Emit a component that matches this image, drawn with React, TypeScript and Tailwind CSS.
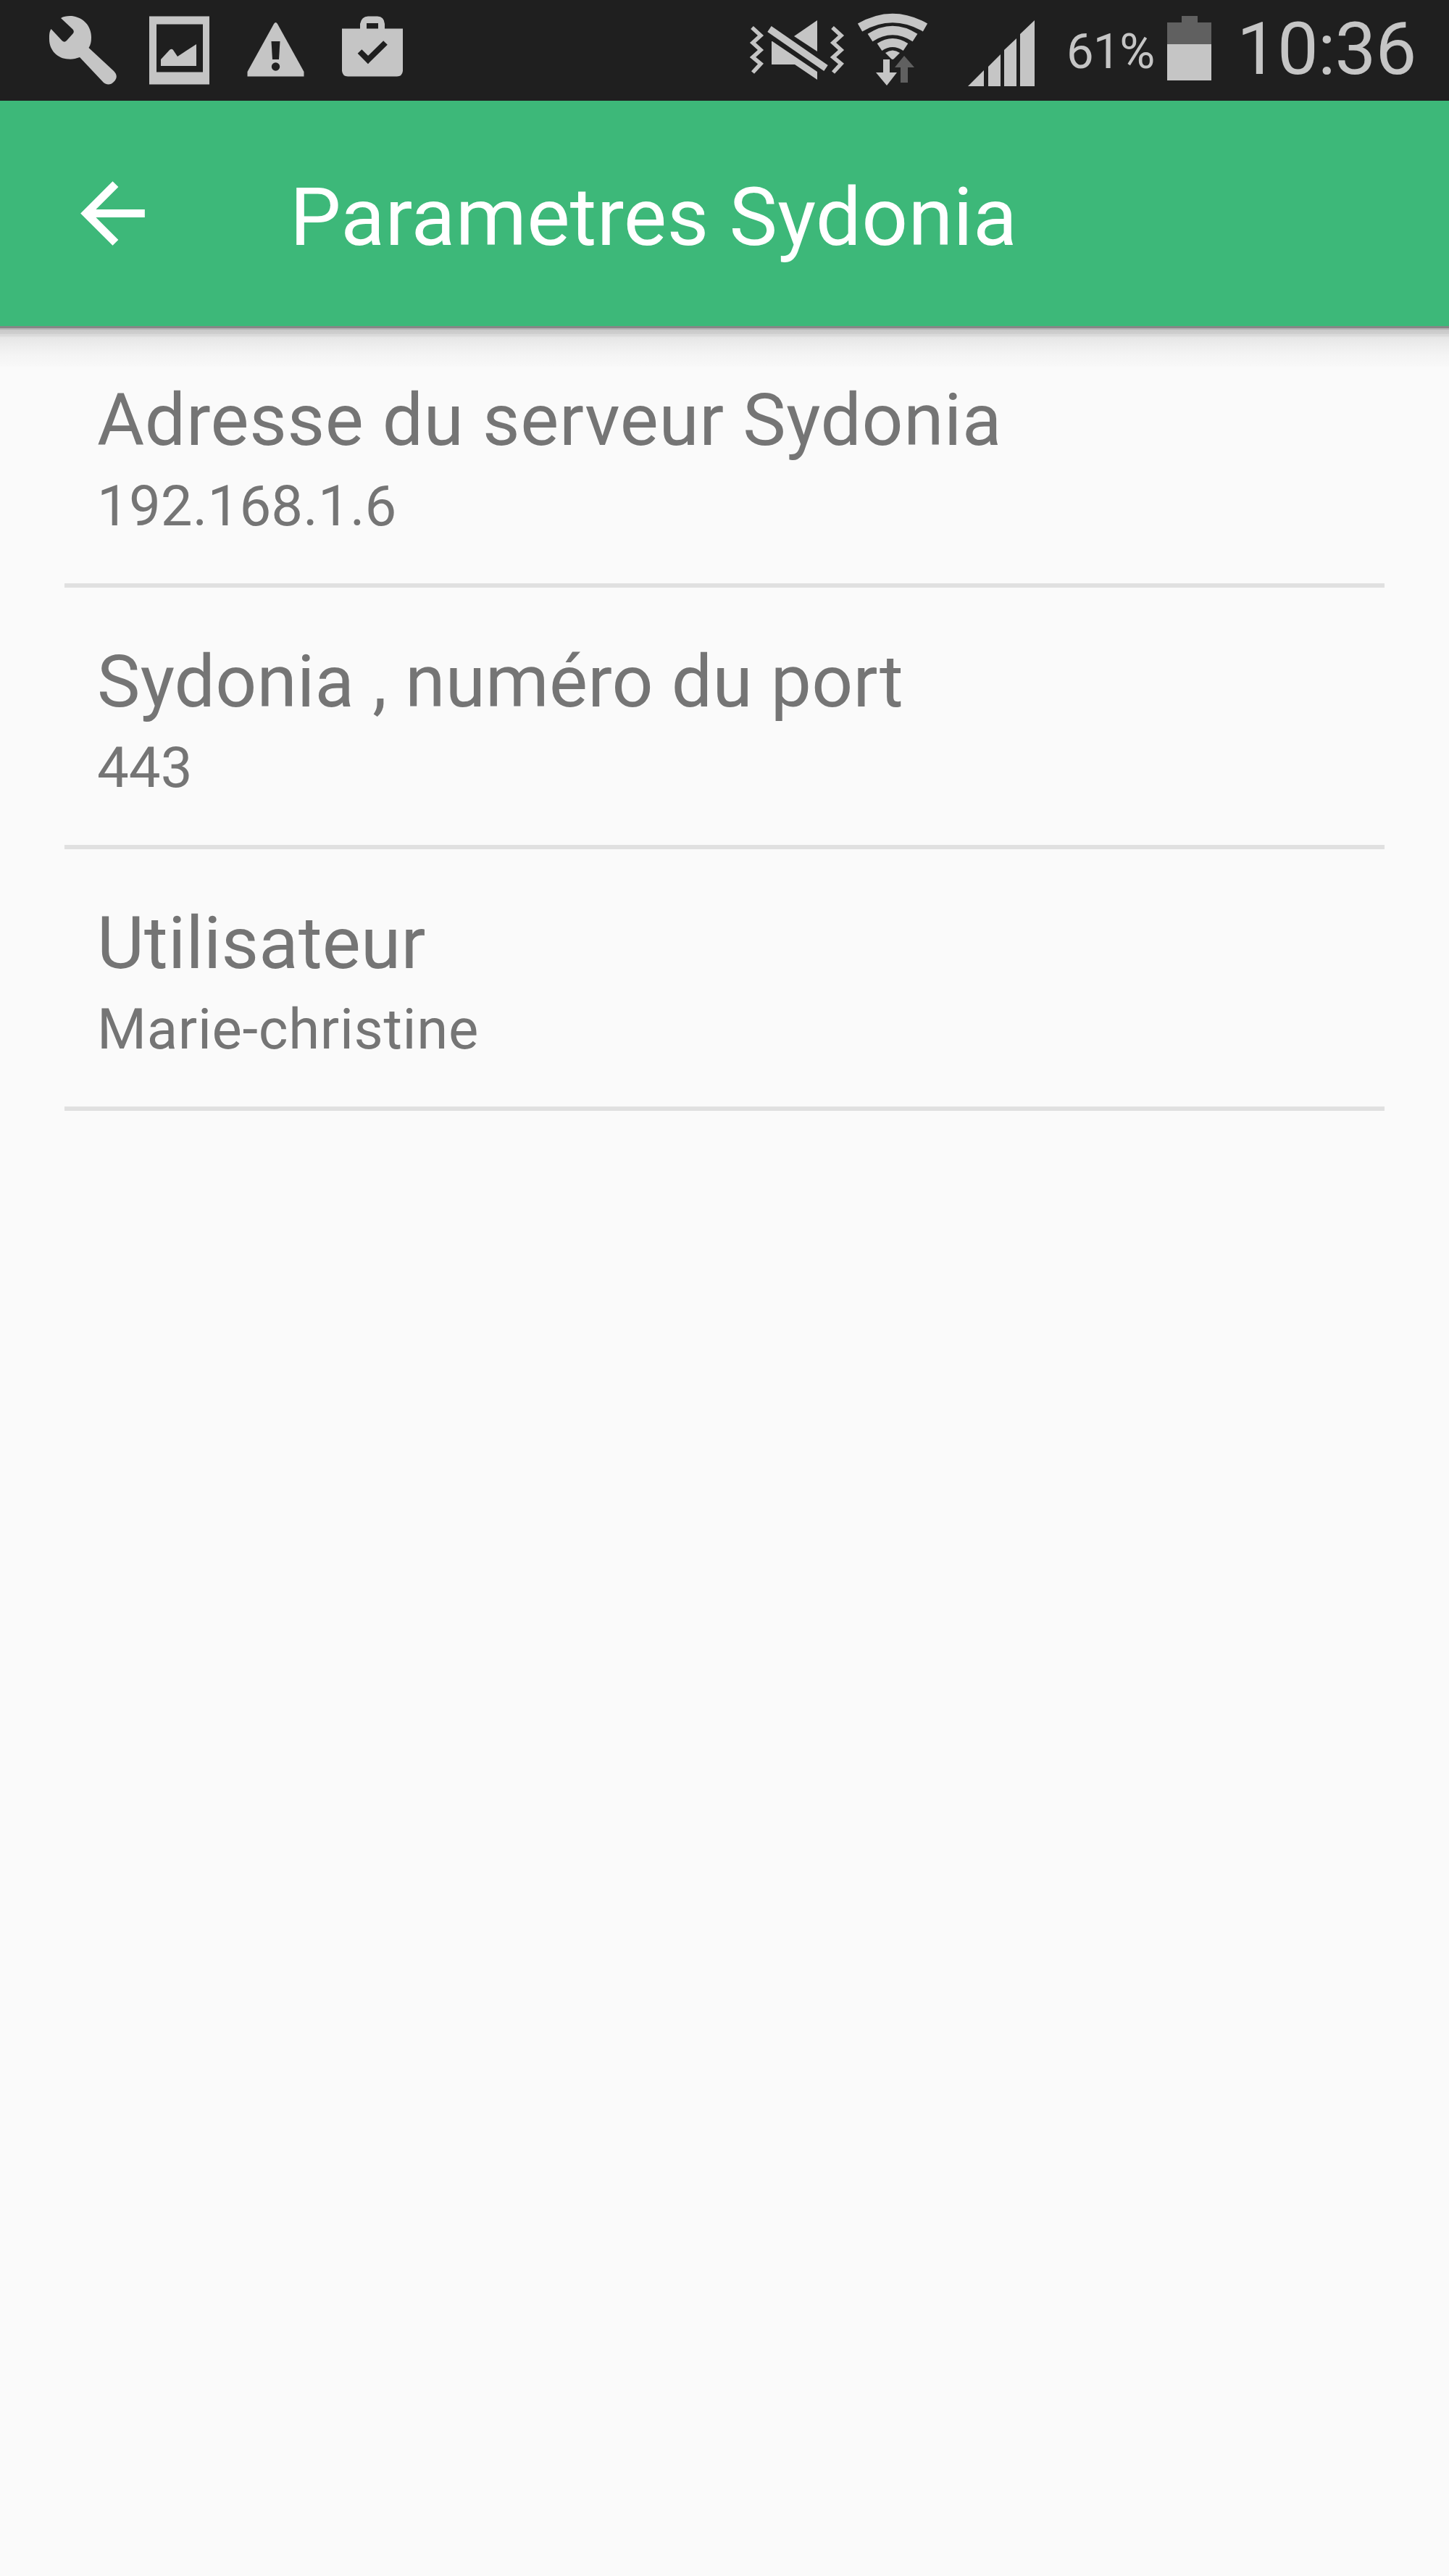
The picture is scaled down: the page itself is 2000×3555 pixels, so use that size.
import type { ReactNode } from "react";

const SETTINGS = [
  { label: "Adresse du serveur Sydonia", value: "192.168.1.6", labelClass: "tracking-[0.64px]", valueClass: "tracking-[0.1px]" },
  { label: "Sydonia , numéro du port", value: "443", labelClass: "tracking-[0.25px]", valueClass: "" },
  { label: "Utilisateur", value: "Marie-christine", labelClass: "tracking-[0.2px]", valueClass: "tracking-[0.65px]" },
];

interface IconProps {
  viewBox: string;
  className: string;
  children: ReactNode;
}

function Icon({ viewBox, className, children }: IconProps) {
  return (
    <svg viewBox={viewBox} fill="currentColor" className={`shrink-0 ${className}`}>
      {children}
    </svg>
  );
}

function StatusBar() {
  return (
    <div className="flex h-[139px] shrink-0 bg-[#1f1f1f] text-[#c5c5c5]">
      {/* Wrench */}
      <Icon viewBox="66 0 98 139" className="ml-[66px] h-[139px] w-[98px]">
        <path d="M84 25C89 22 96 21.500 102 22.500C118 26 126 38 126 52C126 58 125 62 122.500 66L157 98C162 103 162 108 157 113C153 117.500 147 117.500 143 114L110 79C105 81 99 82 94 81.500C80 81 68 70 68 54C68 48 68 44 70.500 40L86 56.500Q89 59 92 56L101 46Q103 43 100 40Z" />
      </Icon>
      {/* Picture */}
      <Icon viewBox="206 0 83 139" className="ml-[42px] h-[139px] w-[83px]">
        <path fillRule="evenodd" d="M206 22.500H289V116.500H206ZM216 33.500V99.500H280V33.500Z" />
        <path d="M222 91V82L234 69Q237 66.500 239 69L245 78L271 61V91Z" />
      </Icon>
      {/* Warning */}
      <Icon viewBox="340 0 81 139" className="ml-[51px] h-[139px] w-[81px]">
        <path d="M378 33Q380.500 29 383 33L419.500 99V105.500H341.500V99Z" />
        <path d="M374.500 57H386.500L385 82H376Z" fill="#1f1f1f" />
        <circle cx="380.500" cy="92" r="5.700" fill="#1f1f1f" />
      </Icon>
      {/* Bag with check */}
      <Icon viewBox="472 0 84 139" className="ml-[51px] h-[139px] w-[84px]">
        <path
          fillRule="evenodd"
          d="M472 39.500H497V33Q499 22.500 508 22.500H521Q530 22.500 531 33V39.500H556V98Q555 105.500 548 105.500H480Q473 105.500 472 98ZM506 32V39.500H522V32Z"
        />
        <path d="M496.500 71L508 82.500L532 59" fill="none" stroke="#1f1f1f" strokeWidth="8" />
      </Icon>
      {/* Muted, vibrate */}
      <Icon viewBox="1034 0 132 139" className="ml-[478px] h-[139px] w-[132px]">
        <g fill="none" stroke="currentColor" strokeWidth="5.500">
          <path d="M1038 38L1050 49L1039 59L1050 69L1039 79L1050 88L1039 100" />
          <path d="M1149 38L1161 49L1150 59L1161 69L1150 79L1161 88L1150 100" />
          <path d="M1062 40L1140 94" strokeWidth="9.500" />
        </g>
        <path d="M1066 57L1128 99V110L1097 89H1065V57Z" />
        <path d="M1128 28V71L1096 50Z" />
      </Icon>
      {/* Wifi with traffic arrows */}
      <Icon viewBox="1180 0 104 139" className="ml-[14px] h-[139px] w-[104px]">
        <g fill="none" stroke="currentColor">
          <path d="M1187 38Q1232 12 1277 38" strokeWidth="12.500" />
          <path d="M1201 52Q1232 32 1263 52" strokeWidth="12.500" />
          <path d="M1214 65Q1232 53 1250 65" strokeWidth="12" />
        </g>
        <path d="M1222 73Q1232 66 1242 73L1234 81Q1232 83 1230 81Z" />
        <path d="M1219 82H1228V100H1238L1224 118L1209 100H1219Z" />
        <path d="M1248 77L1262 93H1253V114H1243V93H1235Z" fill="#606060" />
      </Icon>
      {/* Signal */}
      <Icon viewBox="1336 0 92 139" className="ml-[52px] h-[139px] w-[92px]">
        <path d="M1336 119L1358 97V119ZM1364 119V92L1381 75V119ZM1386 119V69L1403 53V119ZM1408 119V47L1428 28V119Z" />
      </Icon>
      <span className="ml-[44px] mt-[32px] w-[123px] whitespace-nowrap text-[67px] leading-[78px] tracking-[-1px]">
        61%
      </span>
      {/* Battery */}
      <Icon viewBox="1611 0 61 139" className="ml-[16px] h-[139px] w-[61px]">
        <path d="M1631 22H1653V31H1672V61H1611V31H1631Z" fill="#606060" />
        <path d="M1611 61H1672V111H1611Z" />
      </Icon>
      <span className="ml-[35px] mt-[9px] whitespace-nowrap text-[101px] leading-[118px] tracking-[-0.8px]">10:36</span>
    </div>
  );
}

function AppBar() {
  return (
    <header className="relative flex h-[311px] shrink-0 items-center bg-[#3db879] text-white">
      <Icon viewBox="0 0 24 24" className="ml-[89px] size-[133px]">
        <path d="M20 11H7.830l5.590-5.590L12 4l-8 8 8 8 1.410-1.410L7.830 13H20v-2z" />
      </Icon>
      <h1 className="ml-[178px] mt-[11px] whitespace-nowrap text-[112px] leading-[132px] tracking-[0.25px]">
        Parametres Sydonia
      </h1>
      {/* Drop shadow */}
      <div className="absolute inset-x-0 top-full h-[56px] bg-[linear-gradient(to_bottom,#878787_0px,#878787_3px,#b6b6b6_3px,#b6b6b6_5px,#c9c9c9_5px,#cfcfcf_11px,#dadada_11px,#dadada_14px,#e6e6e6_15px,#eeeeee_28px,#f5f5f5_42px,#f8f8f8_55px,#fafafa_56px)]" />
    </header>
  );
}

export default function App() {
  return (
    <div className="flex h-[3555px] w-[2000px] flex-col overflow-hidden bg-[#fafafa] font-[Roboto,sans-serif]">
      <StatusBar />
      <AppBar />
      <main className="px-[89px]">
        {SETTINGS.map(item => (
          <div key={item.label} className="h-[361px] border-b-[6px] border-[#e0e0e0] pt-[71px] pl-[45px] text-[#757575]">
            <div className={`whitespace-nowrap text-[100px] leading-[117px] ${item.labelClass}`}>{item.label}</div>
            <div className={`mt-[15px] whitespace-nowrap text-[78px] leading-[91px] ${item.valueClass}`}>{item.value}</div>
          </div>
        ))}
      </main>
    </div>
  );
}
